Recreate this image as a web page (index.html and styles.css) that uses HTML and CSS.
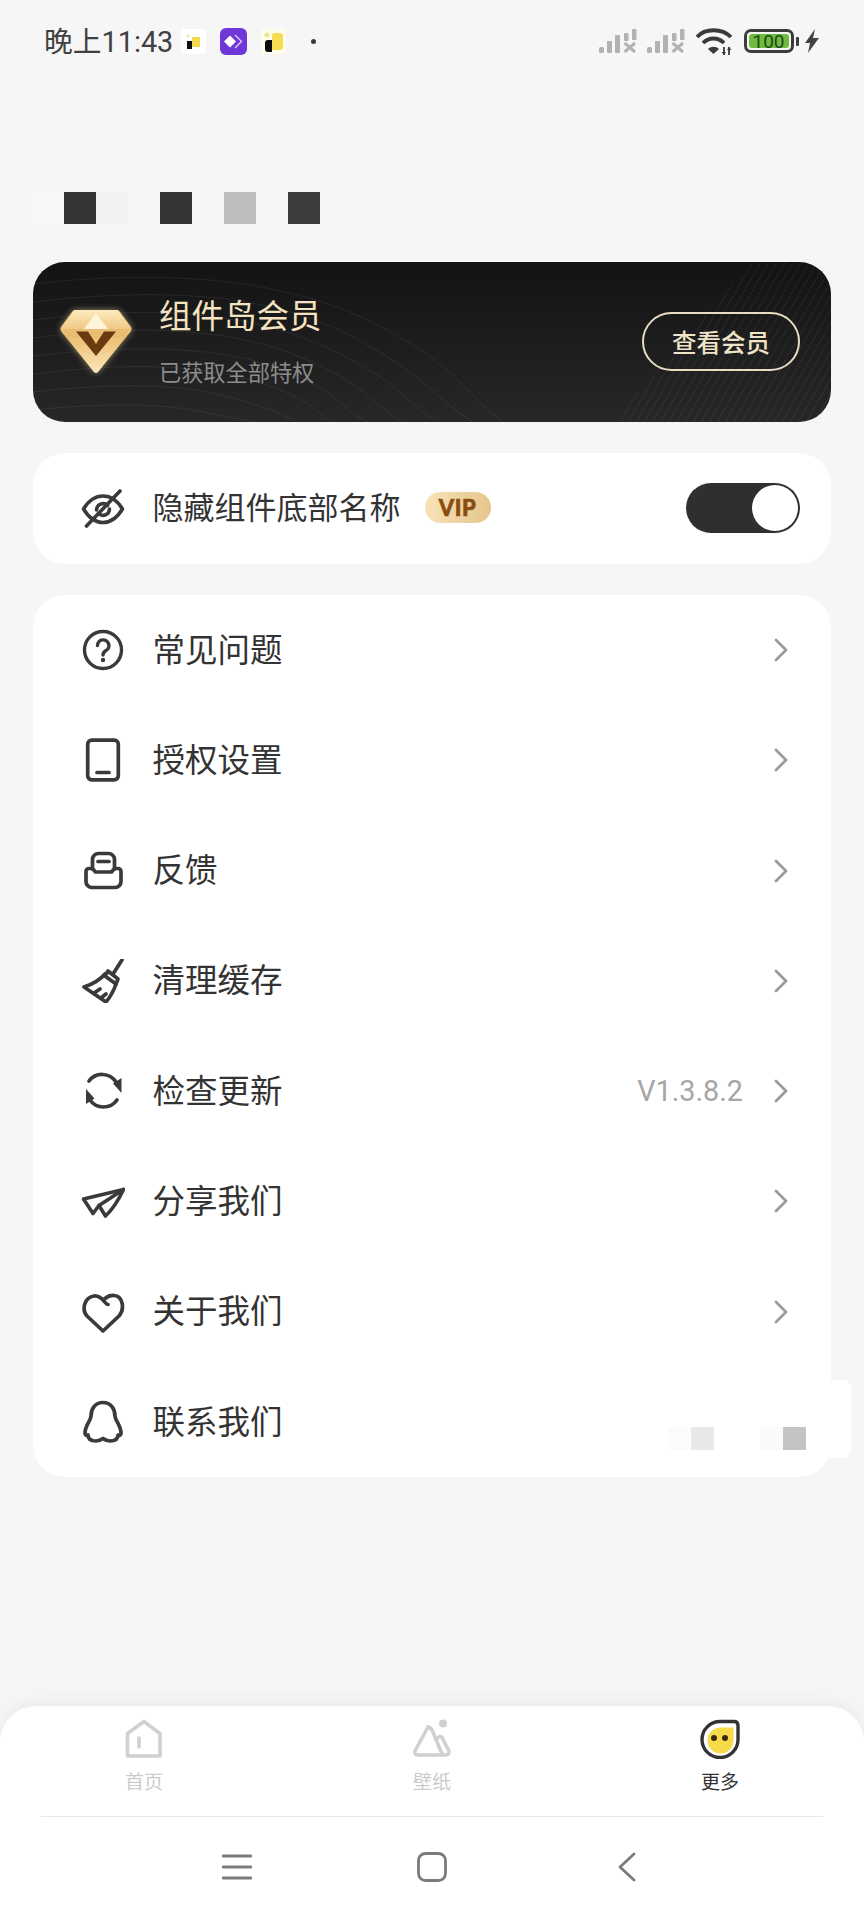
FILE: index.html
```html
<!DOCTYPE html>
<html lang="zh-CN">
<head>
<meta charset="utf-8">
<title>更多</title>
<link rel="stylesheet" href="styles.css">
</head>
<body>
<div class="page">
  <header class="status">
    <span class="time">晚上11:43</span>
    <svg class="app app-a" viewBox="0 0 25 25"><rect width="25" height="25" rx="3" fill="#fff"/><path d="M11 8h8v10h-8z" fill="#f5d94e"/><path d="M6 12h5v8H6z" fill="#111"/><circle cx="7" cy="7" r="1.500" fill="#eee39a"/></svg>
    <svg class="app app-b" viewBox="0 0 27 27"><rect width="27" height="27" rx="6" fill="#6f37d8"/><path d="M10 7.500l6 6-6 6-6-6z" fill="#fff"/><path d="M15 7l6.500 6.500L15 20" fill="none" stroke="#e3d3fb" stroke-width="1.300"/></svg>
    <svg class="app app-c" viewBox="0 0 25 25"><rect width="25" height="25" rx="3" fill="#fffde9"/><path d="M11 7q0-3 3-3h5q3 0 3 3v11q0 3-3 3h-8z" fill="#f7dc52"/><path d="M4 14q0-3 3-3h4v12H7q-3 0-3-3z" fill="#0c0c0c"/><circle cx="6" cy="6" r="2.500" fill="#ece48e"/></svg>
    <span class="dot"></span>
    <span class="status-gap"></span>
    <svg class="signal" viewBox="0 0 38 24"><g fill="#b2b2b2"><rect x="0" y="18" width="5" height="6" rx="1.500"/><rect x="8" y="12" width="5" height="12" rx="1"/><rect x="16" y="6" width="5" height="18" rx="1"/><rect x="25" y="4" width="4.500" height="8" rx="1"/><rect x="33" y="0" width="4.500" height="11" rx="1"/></g><path d="M25.500 14l10.500 9M36 14l-10.500 9" stroke="#b2b2b2" stroke-width="3" fill="none"/></svg>
    <svg class="signal signal-two" viewBox="0 0 38 24"><g fill="#b2b2b2"><rect x="0" y="18" width="5" height="6" rx="1.500"/><rect x="8" y="12" width="5" height="12" rx="1"/><rect x="16" y="6" width="5" height="18" rx="1"/><rect x="25" y="4" width="4.500" height="8" rx="1"/><rect x="33" y="0" width="4.500" height="11" rx="1"/></g><path d="M25.500 14l10.500 9M36 14l-10.500 9" stroke="#b2b2b2" stroke-width="3" fill="none"/></svg>
    <svg class="wifi" viewBox="0 0 38 28"><path d="M2 10C10 1 27 1 36 10M8 16c6-6 15-6 21 0" fill="none" stroke="#3a3a3a" stroke-width="3.800"/><path d="M13 22c3-3 8-3 11 0l-5.500 5z" fill="#3a3a3a"/><path d="M29 20v8M34 20v8" stroke="#3a3a3a" stroke-width="1.800"/><path d="M26.500 25l2.500 3 2-3M32 23l2-3 2.500 3" fill="#3a3a3a"/></svg>
    <span class="battery"><span class="battery-fill">100</span></span>
    <span class="nib"></span>
    <svg class="bolt" viewBox="0 0 16 24"><path d="M11 0L1 14h5l-2 10L15 9H9z" fill="#444"/></svg>
  </header>

  <div class="mosaic">
    <span class="cell c-faint"></span><span class="cell c-dark"></span><span class="cell c-soft"></span><span class="cell"></span>
    <span class="cell c-dark"></span><span class="cell"></span><span class="cell c-mid"></span><span class="cell"></span><span class="cell c-dark2"></span>
  </div>

  <section class="banner">
    <svg class="banner-waves" viewBox="0 0 798 160" preserveAspectRatio="none" aria-hidden="true">
      <g fill="none" stroke="#fff" stroke-opacity=".07" stroke-width="1">
        <path d="M0 22C120 8 240 14 330 56S430 130 470 160"/>
        <path d="M0 40C120 26 230 30 310 70S400 135 440 160"/>
        <path d="M0 58C110 44 210 48 290 84S370 140 405 160"/>
        <path d="M0 76C110 62 200 66 270 96S340 145 370 160"/>
        <path d="M0 94C100 82 190 84 250 108S310 150 335 160"/>
        <path d="M0 112C100 100 170 102 230 122S280 152 300 160"/>
        <path d="M0 130C90 120 150 122 200 136S250 154 265 160"/>
        <path d="M0 148C80 140 130 142 170 150S210 158 225 160"/>
      </g>
    </svg>
    <div class="banner-hatch"></div>
    <svg class="gem" viewBox="0 0 72 65">
      <defs>
        <linearGradient id="gemBody" x1="0" y1="0" x2="0" y2="1"><stop offset="0" stop-color="#f6d693"/><stop offset=".5" stop-color="#edc278"/><stop offset="1" stop-color="#fde8bd"/></linearGradient>
        <linearGradient id="gemTop" x1="0" y1="0" x2="0" y2="1"><stop offset="0" stop-color="#fdeac0"/><stop offset="1" stop-color="#f0ca82"/></linearGradient>
      </defs>
      <path d="M15 1H57Q59 1 60 3L71 18Q72 20 71 22L38 63Q36 65 34 63L1 22Q0 20 1 18L12 3Q13 1 15 1Z" fill="url(#gemBody)"/>
      <path d="M15 1H57L71 20H1Z" fill="url(#gemTop)"/>
      <path d="M24 20L36 4 48 20z" fill="#fff5dd"/>
      <path d="M1 20H71L64 29H8Z" fill="#e0b265" fill-opacity=".45"/>
      <path d="M16 22.500H28L36 35 44 22.500H56L36 47Z" fill="#69390f"/>
    </svg>
    <div class="banner-text">
      <div class="banner-title">组件岛会员</div>
      <div class="banner-sub">已获取全部特权</div>
    </div>
    <div class="banner-btn">查看会员</div>
  </section>

  <section class="card card-hide">
    <svg class="ico" viewBox="0 0 44 44"><g fill="none" stroke="#3a3a3a" stroke-width="3.600" stroke-linecap="round" stroke-linejoin="round"><path d="M2.500 22C8 13 14 9 22 9S36 13 41.500 22C36 31 30 35.500 22 35.500S8 31 2.500 22Z"/><path d="M15.500 23a6.500 6.500 0 0 1 11-4.500M28.500 22a6.500 6.500 0 0 1-11 4.500"/><path d="M5.500 39L39 4"/></g></svg>
    <span class="label label-hide">隐藏组件底部名称</span>
    <span class="vip">VIP</span>
    <span class="grow"></span>
    <span class="toggle"><span class="knob"></span></span>
  </section>

  <section class="card card-list">
    <div class="row">
      <svg class="ico" viewBox="0 0 44 44"><g fill="none" stroke="#3a3a3a" stroke-width="3.400" stroke-linecap="round"><circle cx="22" cy="22" r="18.500"/><path d="M16.500 17.500a5.700 5.700 0 1 1 8.500 5c-2 1.200-3 2.200-3 4.500"/></g><circle cx="22" cy="32" r="2.200" fill="#3a3a3a"/></svg>
      <span class="label">常见问题</span><span class="grow"></span>
      <svg class="chev" viewBox="0 0 14 24"><path d="M2 2l10 10L2 22" /></svg>
    </div>
    <div class="row">
      <svg class="ico" viewBox="0 0 44 44"><g fill="none" stroke="#3a3a3a" stroke-width="3.700" stroke-linecap="round"><rect x="6.700" y="2.200" width="30.600" height="39.600" rx="4"/><path d="M16 34.500h12"/></g></svg>
      <span class="label">授权设置</span><span class="grow"></span>
      <svg class="chev" viewBox="0 0 14 24"><path d="M2 2l10 10L2 22" /></svg>
    </div>
    <div class="row">
      <svg class="ico" viewBox="0 0 44 44"><g fill="none" stroke="#3a3a3a" stroke-width="3.700" stroke-linecap="round" stroke-linejoin="round"><path d="M11.500 20V10.500a6 6 0 0 1 6-6h10a6 6 0 0 1 6 6V20"/><path d="M17 12.500h11"/><path d="M11.500 19.500H8a3 3 0 0 0-3 3v10a6 6 0 0 0 6 6h23a6 6 0 0 0 6-6v-10a3 3 0 0 0-3-3h-3.500l-3 3.500H14.500z"/></g></svg>
      <span class="label">反馈</span><span class="grow"></span>
      <svg class="chev" viewBox="0 0 14 24"><path d="M2 2l10 10L2 22" /></svg>
    </div>
    <div class="row">
      <svg class="ico" viewBox="0 0 44 44"><g fill="none" stroke="#3a3a3a" stroke-width="3.700" stroke-linecap="round" stroke-linejoin="round"><path d="M41 1L32 15"/><path d="M27 12l10 8-2 5-11-8z"/><path d="M24 15C19 21 12 25 3 28L25 43C30 37 33 31 35 25"/><path d="M13 34l6-4M20 39l5-4"/></g></svg>
      <span class="label">清理缓存</span><span class="grow"></span>
      <svg class="chev" viewBox="0 0 14 24"><path d="M2 2l10 10L2 22" /></svg>
    </div>
    <div class="row">
      <svg class="ico" viewBox="0 0 44 44"><g fill="none" stroke="#3a3a3a" stroke-width="3.700" stroke-linecap="round"><path d="M8 12A16.500 16.500 0 0 1 35 13"/><path d="M36 31A16.500 16.500 0 0 1 9 31"/></g><path d="M40.500 9v15L32 14.500zM5 35V20l8.500 9.500z" fill="#3a3a3a"/></svg>
      <span class="label">检查更新</span><span class="grow"></span>
      <span class="ver">V1.3.8.2</span>
      <svg class="chev" viewBox="0 0 14 24"><path d="M2 2l10 10L2 22" /></svg>
    </div>
    <div class="row">
      <svg class="ico" viewBox="0 0 44 44"><g fill="none" stroke="#3a3a3a" stroke-width="3.600" stroke-linecap="round" stroke-linejoin="round"><path d="M42.500 10.500L2.500 20 12 34.500l6-8L24.500 37C32 30 38 20 42.500 10.500Z"/><path d="M42.500 10.500L18 26.500"/></g></svg>
      <span class="label">分享我们</span><span class="grow"></span>
      <svg class="chev" viewBox="0 0 14 24"><path d="M2 2l10 10L2 22" /></svg>
    </div>
    <div class="row">
      <svg class="ico" viewBox="0 0 44 44"><path d="M27 14.500C24 14.500 21 5 13 6 4 7 0 19 6 26L22 41 38 26C44 19 42 6 33 5.500 30 5.300 27 6 24 8.500" fill="none" stroke="#3a3a3a" stroke-width="3.700" stroke-linecap="round" stroke-linejoin="round"/></svg>
      <span class="label">关于我们</span><span class="grow"></span>
      <svg class="chev" viewBox="0 0 14 24"><path d="M2 2l10 10L2 22" /></svg>
    </div>
    <div class="row">
      <svg class="ico" viewBox="0 0 44 44"><path d="M22 2.500C14 2.500 10 9 10 16 10 20 4 26 4 33 4 35 5 36 7 35 7 38 9 41 15 41 18 41 20 40 22 38.500 24 40 26 41 29 41 35 41 37 38 37 35 39 36 40 35 40 33 40 26 34 20 34 16 34 9 30 2.500 22 2.500Z" fill="none" stroke="#3a3a3a" stroke-width="3.700" stroke-linejoin="round"/></svg>
      <span class="label label-last">联系我们</span>
    </div>
    <div class="bump">
      <span class="patch p-a"></span><span class="patch p-b"></span><span class="patch-gap"></span><span class="patch p-c"></span><span class="patch p-d"></span>
    </div>
  </section>

  <footer class="dock">
    <nav class="tabs">
      <div class="tab">
        <svg class="tab-ico" viewBox="0 0 40 40"><g fill="none" stroke="#d0d0d0" stroke-width="3.600" stroke-linejoin="round" stroke-linecap="round"><path d="M20 2.500L36 14.500V37H3.500V14.500Z"/><path d="M15 19v9"/></g></svg>
        <span class="tab-label">首页</span>
      </div>
      <div class="tab">
        <svg class="tab-ico" viewBox="0 0 40 40"><g fill="none" stroke="#d0d0d0" stroke-width="3.600" stroke-linejoin="round" stroke-linecap="round"><path d="M16 8L3.500 31Q1.500 36 6 36H33Q38.500 36 36.500 31L30 18.500Q27 16 25 20"/><path d="M16 8Q18.500 8 20.500 12L30 35"/></g><circle cx="31" cy="4.500" r="4" fill="#d0d0d0"/></svg>
        <span class="tab-label">壁纸</span>
      </div>
      <div class="tab tab-on">
        <svg class="tab-ico" viewBox="0 0 40 40"><path d="M20 2.500H34Q38 2.500 38 6.500V20A18 18 0 1 1 20 2.500Z" fill="#fff" stroke="#333" stroke-width="3.400"/><path d="M21 8.500H33.500V21A13 13 0 1 1 21 8.500Z" fill="#f7da4a"/><circle cx="14" cy="19" r="3" fill="#3a2c08"/><circle cx="25" cy="19" r="3" fill="#3a2c08"/></svg>
        <span class="tab-label">更多</span>
      </div>
    </nav>
    <div class="divider"></div>
    <div class="sysnav">
      <svg class="sys sys-menu" viewBox="0 0 30 28"><path d="M1 3h28M1 14h28M1 25h28" fill="none" stroke="#7b7b7b" stroke-width="2.800" stroke-linecap="round"/></svg>
      <svg class="sys sys-home" viewBox="0 0 30 30"><rect x="1.500" y="1.500" width="27" height="27" rx="7" fill="none" stroke="#7b7b7b" stroke-width="2.800"/></svg>
      <svg class="sys sys-back" viewBox="0 0 18 30"><path d="M16 2L2 15l14 13" fill="none" stroke="#7b7b7b" stroke-width="2.800" stroke-linecap="round" stroke-linejoin="round"/></svg>
    </div>
  </footer>
</div>
</body>
</html>
```

FILE: styles.css
```css
* { box-sizing: border-box; }
html, body { margin: 0; padding: 0; }
body {
  background: #f6f6f6;
  font-family: "Noto Sans CJK SC", "Noto Sans", sans-serif;
  color: #333;
}
.page { width: 864px; height: 1920px; display: flex; flex-direction: column; overflow: hidden; }

/* status bar */
.status { height: 82px; flex: none; display: flex; align-items: center; padding-left: 44px; }
.time { font-family: "Roboto", "Noto Sans CJK SC", sans-serif; font-size: 28.800px; line-height: 40px; color: #404040; width: 137px; flex: none; white-space: nowrap; margin-top: 2px; }
.app { flex: none; display: block; }
.app-a { width: 25px; height: 25px; }
.app-b { width: 27px; height: 27px; margin-left: 14px; }
.app-c { width: 25px; height: 25px; margin-left: 14px; }
.dot { width: 5px; height: 5px; border-radius: 50%; background: #3c3c3c; margin-left: 25px; flex: none; }
.status-gap { flex: 1; }
.signal { width: 38px; height: 24px; flex: none; }
.signal-two { margin-left: 10px; }
.wifi { width: 38px; height: 28px; margin-left: 10px; flex: none; }
.battery { width: 50px; height: 24px; margin-left: 11px; border: 3px solid #3c3c3c; border-radius: 7px; padding: 2px; flex: none; display: flex; }
.battery-fill { flex: 1; background: #6fbb42; border-radius: 3px; font: 19px/16px "Roboto", sans-serif; color: #1c4a12; text-align: center; }
.nib { width: 3px; height: 9px; background: #3c3c3c; border-radius: 1px; margin-left: 2px; flex: none; }
.bolt { width: 16px; height: 24px; margin-left: 5.500px; margin-right: 44px; flex: none; }

/* mosaic under the status bar */
.mosaic { margin-top: 110px; height: 32px; padding-left: 32px; display: flex; flex: none; }
.cell { width: 32px; height: 32px; flex: none; }
.c-faint { background: #f7f7f7; }
.c-dark { background: #343434; }
.c-dark2 { background: #3d3d3d; }
.c-soft { background: #f1f1f1; }
.c-mid { background: #bebebe; }

/* banner */
.banner {
  position: relative; overflow: hidden; flex: none;
  margin: 38px 33px 0; height: 160px; border-radius: 32px;
  background: linear-gradient(180deg, #131313 0%, #272727 100%);
  display: flex; align-items: center; padding: 0 31px 0 27px;
}
.banner-waves { position: absolute; left: 0; top: 0; width: 100%; height: 100%; }
.banner-hatch {
  position: absolute; inset: 0;
  background: repeating-linear-gradient(120deg, rgba(255,255,255,.05) 0 1px, transparent 1px 7px);
  clip-path: polygon(90% 0, 100% 0, 100% 100%, 72.500% 100%);
}
.gem { position: relative; width: 72px; height: 65px; flex: none; margin-top: -2px; filter: drop-shadow(0 0 3px rgba(255,225,165,.55)); }
.banner-text { position: relative; flex: 1; margin-left: 27px; margin-top: -6px; }
.banner-title { font-size: 32.500px; line-height: 44px; color: #f4e3c2; }
.banner-sub { font-size: 22.200px; line-height: 30px; color: #8c8c8c; margin-top: 20px; }
.banner-btn {
  position: relative; flex: none; width: 158px; height: 59px; margin-top: -1px;
  border: 2px solid #e8dcc2; border-radius: 30px;
  font-size: 24.500px; font-weight: 500; line-height: 55px; text-align: center; color: #efe3c9;
}

/* cards */
.card { background: #fff; margin: 0 33px; border-radius: 32px; flex: none; }
.card-hide { margin-top: 31px; height: 111px; display: flex; align-items: center; padding: 0 31px 0 48px; }
.card-list { position: relative; margin-top: 31px; }
.row { height: 110.250px; display: flex; align-items: center; padding: 0 43px 0 48px; }
.ico { width: 44px; height: 44px; flex: none; display: block; }
.label { font-size: 32.500px; line-height: 44px; color: #333; margin: 0 0 5px 27.500px; white-space: nowrap; }
.label-hide { font-size: 31px; margin-bottom: 6px; }
.label-last { margin-bottom: 3px; }
.grow { flex: 1; }
.chev { width: 14px; height: 24px; flex: none; fill: none; stroke: #9a9a9a; stroke-width: 2.800; stroke-linecap: round; stroke-linejoin: round; }
.ver { font-family: "Roboto", sans-serif; font-size: 28.800px; font-weight: 400; color: #a6a6a6; margin-right: 31px; }

.vip {
  margin-left: 24px; width: 66px; height: 31px; border-radius: 16px; flex: none;
  background: linear-gradient(90deg, #f7e3b8, #e6c58c);
  font: 900 22px/31px "Lato", sans-serif; color: #8a4c12; text-align: center; letter-spacing: .5px;
  -webkit-text-stroke: .6px #8a4c12;
  margin-bottom: 2px;
}
.toggle { width: 114px; height: 50px; border-radius: 25px; background: #2f2f2f; flex: none; display: flex; align-items: center; justify-content: flex-end; padding-right: 2px; margin-bottom: 1px; }
.knob { width: 46px; height: 46px; border-radius: 50%; background: #fff; }

/* blurred-out corner of the last row */
.bump {
  position: absolute; right: -20px; bottom: 19px; width: 200px; height: 78px;
  background: #fff; border-radius: 0 8px 8px 0;
  display: flex; align-items: flex-end; padding: 0 0 8px 17px;
}
.patch { width: 23px; height: 23px; flex: none; }
.patch-gap { width: 46px; flex: none; }
.p-a { background: #fbfbfb; }
.p-b { background: #e8e8e8; }
.p-c { background: #fafafa; }
.p-d { background: #c4c4c4; }

/* bottom dock */
.dock {
  margin-top: auto; height: 214px; flex: none; background: #fff;
  border-radius: 36px 36px 0 0;
  box-shadow: 0 -4px 18px rgba(0,0,0,.05);
}
.tabs { height: 109px; display: grid; grid-template-columns: repeat(3, 1fr); }
.tab { display: flex; flex-direction: column; align-items: center; padding-top: 13px; }
.tab-ico { width: 40px; height: 40px; display: block; flex: none; }
.tab-label { font-size: 19px; line-height: 26px; margin-top: 9px; color: #cbcbcb; }
.tab-on .tab-label { color: #333; }
.divider { height: 1px; margin: 1px 41px 0; background: #e9e9e9; }
.sysnav { height: 100px; display: grid; grid-template-columns: repeat(3, 1fr); align-items: center; justify-items: center; padding: 0 139.500px; }
.sys { display: block; }
.sys-menu { width: 30px; height: 28px; }
.sys-home { width: 30px; height: 30px; }
.sys-back { width: 18px; height: 30px; }
```
